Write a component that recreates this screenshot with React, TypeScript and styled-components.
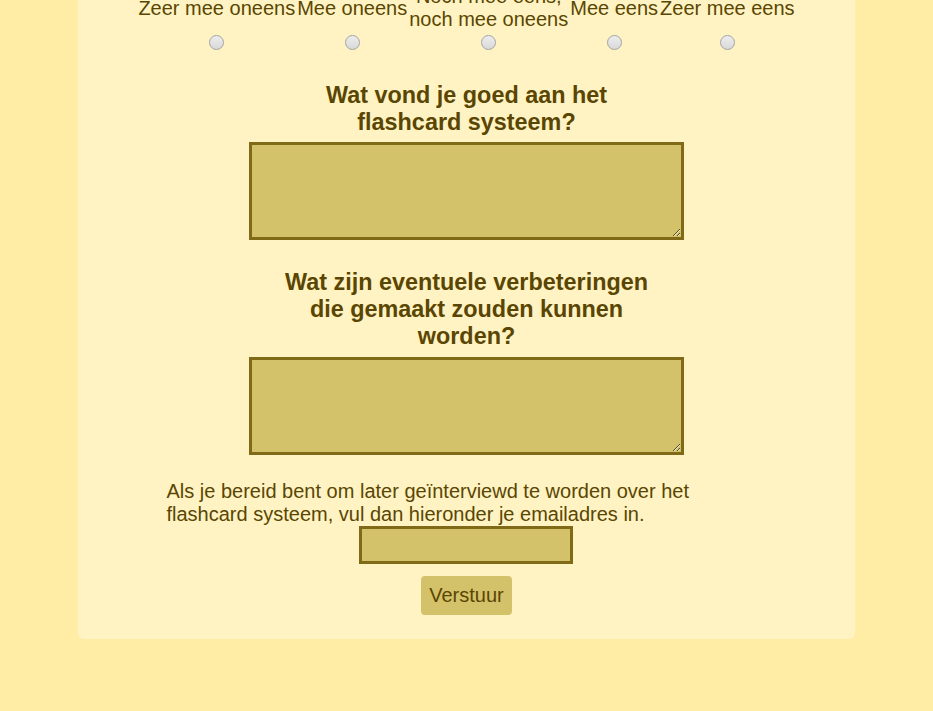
import React from "react";
import styled, { createGlobalStyle } from "styled-components";

const Global = createGlobalStyle`
  html, body {
    margin: 0;
    padding: 0;
    background: #ffeda6;
    overflow: hidden;
  }
  body {
    font-family: "Liberation Sans", Arial, sans-serif;
    font-size: 20px;
    color: #5a4602;
  }
`;

const Page = styled.div`
  width: 100%;
  min-height: 711px;
  background: #ffeda6;
`;

const Card = styled.form`
  width: 777px;
  margin: -15px auto 0;
  background: #fff3c3;
  border-radius: 0 0 6px 6px;
  padding: 0 0 24px;
  box-sizing: border-box;
  display: flex;
  flex-direction: column;
  align-items: center;
`;

const Scale = styled.div`
  display: flex;
  justify-content: center;
  gap: 2px;
`;

const Option = styled.label`
  display: flex;
  flex-direction: column;
  align-items: center;
  text-align: center;
`;

const OptionText = styled.span`
  flex: 1;
  display: flex;
  align-items: center;
  justify-content: center;
  line-height: 23px;
  white-space: nowrap;
`;

const Radio = styled.input.attrs({ type: "radio" })`
  appearance: none;
  -webkit-appearance: none;
  width: 15px;
  height: 15px;
  margin: 4px 0 0;
  border-radius: 50%;
  border: 1px solid #a3a3a3;
  background: linear-gradient(#ededed, #d9d9d9);
  box-sizing: border-box;
`;

const Question = styled.h3<{ $top: number; $bottom: number }>`
  width: 380px;
  margin: ${(p) => p.$top}px 0 ${(p) => p.$bottom}px;
  text-align: center;
  font-size: 23.4px;
  line-height: 27px;
  font-weight: bold;
  color: #5a4602;
`;

const TextArea = styled.textarea`
  display: block;
  width: 435px;
  height: 98px;
  box-sizing: border-box;
  border: 3px solid #806a17;
  background: #d4c26a;
  margin: 0;
  resize: vertical;
  font-family: inherit;
`;

const Note = styled.p`
  width: 600px;
  margin: 25px 0 0;
  font-size: 20px;
  line-height: 23px;
  text-align: left;
`;

const EmailInput = styled.input.attrs({ type: "email" })`
  display: block;
  width: 214px;
  height: 38px;
  box-sizing: border-box;
  border: 3px solid #806a17;
  background: #d4c26a;
  margin: 0 1px 0 0;
`;

const Submit = styled.button`
  margin-top: 12px;
  height: 39px;
  padding: 0 8px;
  border: none;
  border-radius: 4px;
  background: #d4c26a;
  color: #5a4602;
  font-family: "Liberation Sans", Arial, sans-serif;
  font-size: 20px;
`;

const options: React.ReactNode[] = [
  "Zeer mee oneens",
  "Mee oneens",
  <>
    Noch mee eens,
    <br />
    noch mee oneens
  </>,
  "Mee eens",
  "Zeer mee eens",
];

export default function App() {
  return (
    <Page>
      <Global />
      <Card onSubmit={(e) => e.preventDefault()}>
        <Scale>
          {options.map((o, i) => (
            <Option key={i}>
              <OptionText>{o}</OptionText>
              <Radio name="scale" />
            </Option>
          ))}
        </Scale>
        <Question $top={32} $bottom={6}>
          Wat vond je goed aan het flashcard systeem?
        </Question>
        <TextArea />
        <Question $top={29} $bottom={7}>
          Wat zijn eventuele verbeteringen die gemaakt zouden kunnen worden?
        </Question>
        <TextArea />
        <Note>
          Als je bereid bent om later geïnterviewd te worden over het flashcard
          systeem, vul dan hieronder je emailadres in.
        </Note>
        <EmailInput />
        <Submit type="submit">Verstuur</Submit>
      </Card>
    </Page>
  );
}
